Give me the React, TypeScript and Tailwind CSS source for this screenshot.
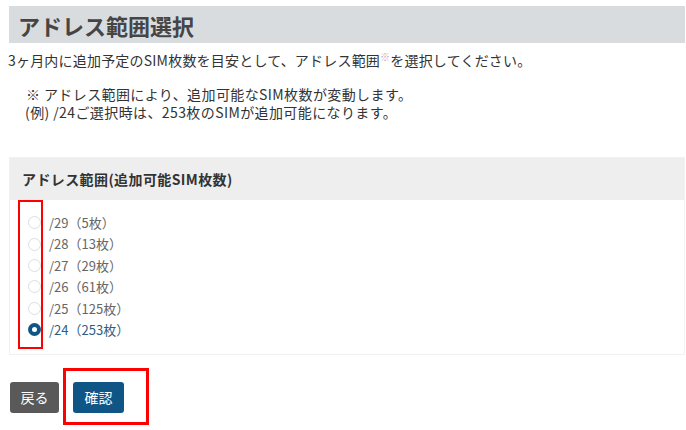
import { useState } from "react";

const RANGES = [
  { value: "29", count: 5 },
  { value: "28", count: 13 },
  { value: "27", count: 29 },
  { value: "26", count: 61 },
  { value: "25", count: 125 },
  { value: "24", count: 253 },
];

function Radio({ checked }: { checked: boolean }) {
  if (checked) {
    return (
      <span className="flex h-[13px] w-[13px] items-center justify-center rounded-full bg-[#0f5586]">
        <span className="h-[5px] w-[5px] rounded-full bg-white" />
      </span>
    );
  }
  return <span className="h-[13px] w-[13px] rounded-full border border-[#dcdee2] bg-white" />;
}

export default function App() {
  const [range, setRange] = useState("24");

  return (
    <div
      className="relative h-[430px] w-[686px] overflow-hidden bg-white pl-[9px] pr-px pt-[6px] text-[#333]"
      style={{ fontFamily: '"Noto Sans CJK JP", "Noto Sans", sans-serif' }}
    >
      {/* page title */}
      <div className="flex h-[37px] items-center bg-[#d8dcdf] pl-[9px]">
        <h1 className="text-[22px] font-bold leading-none text-[#454545]">アドレス範囲選択</h1>
      </div>

      <p className="mt-[7px] -ml-px text-[14px] leading-[20px] tracking-[0.2px]">
        3ヶ月内に追加予定のSIM枚数を目安として、アドレス範囲
        <sup className="text-[10px] text-[#c4a6bb]">※</sup>
        を選択してください。
      </p>

      <div className="mt-[15px] pl-[17px] text-[14px] leading-[18px] tracking-[0.4px]">
        <p>※ アドレス範囲により、追加可能なSIM枚数が変動します。</p>
        <p className="-ml-px">(例) /24ご選択時は、253枚のSIMが追加可能になります。</p>
      </div>

      {/* range panel */}
      <div className="mt-[36px] border border-[#f1f1f1]">
        <div className="flex h-[42px] items-center bg-[#eeeeee] pl-[12px]">
          <span className="text-[14px] font-bold tracking-[0.4px] text-[#333]">アドレス範囲(追加可能SIM枚数)</span>
        </div>
        <ul className="pb-[14px] pl-[18px] pt-[12px]">
          {RANGES.map((r) => {
            const checked = range === r.value;
            return (
              <li
                key={r.value}
                onClick={() => setRange(r.value)}
                className="flex h-[21.4px] cursor-pointer items-center gap-[8px]"
              >
                <Radio checked={checked} />
                <span className={checked ? "text-[13px] text-[#2d5f84]" : "text-[13px] text-[#666]"}>
                  /{r.value}（{r.count}枚）
                </span>
              </li>
            );
          })}
        </ul>
      </div>

      <div className="mt-[27px] flex gap-[14px] pl-px">
        <button className="h-[31px] w-[49px] rounded-[3px] bg-[#595959] text-[14px] text-white">戻る</button>
        <button className="h-[31px] w-[51px] rounded-[3px] bg-[#0f5586] text-[14px] text-white">確認</button>
      </div>

      {/* annotation boxes */}
      <div className="pointer-events-none absolute left-[18px] top-[200px] h-[149px] w-[25px] border-2 border-[#ff0000]" />
      <div className="pointer-events-none absolute left-[63px] top-[368px] h-[57px] w-[86px] border-[3px] border-[#ff0000]" />
    </div>
  );
}
